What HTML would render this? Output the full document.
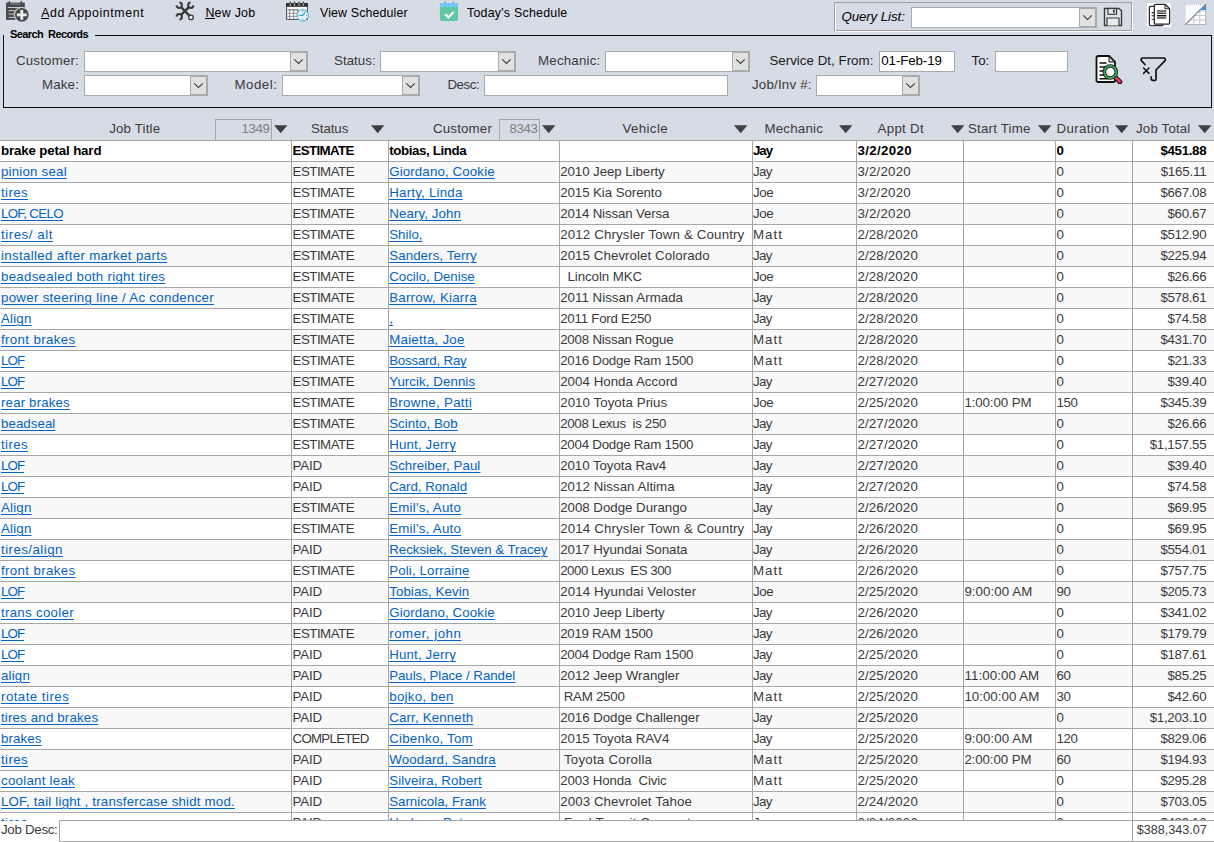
<!DOCTYPE html>
<html lang="en"><head><meta charset="utf-8"><title>Job List</title><style>
html,body{margin:0;padding:0;}
body{width:1214px;height:842px;overflow:hidden;background:#fff;font-family:"Liberation Sans", sans-serif;position:relative;}
#app{position:absolute;left:0;top:0;width:1214px;height:842px;overflow:hidden;}
#app div,#app svg,#app span{position:absolute;}
.t{white-space:pre;line-height:16px;height:16px;}
.u{text-decoration:underline;text-decoration-thickness:1px;text-underline-offset:1.5px;}
</style></head><body><div id="app">
<div style="left:0px;top:0px;width:1214px;height:140px;background:#d6dce5;"></div>
<div style="left:0px;top:141px;width:1214px;height:20px;background:#ffffff;"></div>
<div style="left:0px;top:140px;width:1214px;height:1px;background:#a6a6a6;"></div>
<span class="t" style="left:1.00px;top:143.00px;font-size:13.3px;letter-spacing:-0.148px;color:#000000;font-weight:bold;">brake petal hard</span>
<span class="t" style="left:292.60px;top:143.00px;font-size:13.3px;letter-spacing:-0.638px;color:#000000;font-weight:bold;">ESTIMATE</span>
<span class="t" style="left:389.20px;top:143.00px;font-size:13.3px;letter-spacing:-0.377px;color:#000000;font-weight:bold;">tobias, Linda</span>
<span class="t" style="left:753.00px;top:143.00px;font-size:13.3px;letter-spacing:-1.073px;color:#000000;font-weight:bold;">Jay</span>
<span class="t" style="left:857.40px;top:143.00px;font-size:13.3px;letter-spacing:0.349px;color:#000000;font-weight:bold;">3/2/2020</span>
<span class="t" style="left:1056.40px;top:143.00px;font-size:13.3px;letter-spacing:-0.406px;color:#000000;font-weight:bold;">0</span>
<span class="t" style="left:1160.39px;top:143.00px;font-size:13.3px;letter-spacing:-0.311px;color:#000000;font-weight:bold;">$451.88</span>
<div style="left:0px;top:162px;width:1214px;height:20px;background:#f8f8f8;"></div>
<div style="left:0px;top:161px;width:1214px;height:1px;background:#a6a6a6;"></div>
<span class="t u" style="left:1.00px;top:164.00px;font-size:13.3px;letter-spacing:0.201px;color:#0563c1;">pinion seal</span>
<span class="t" style="left:292.60px;top:164.00px;font-size:13.3px;letter-spacing:-0.509px;color:#3a3a3a;">ESTIMATE</span>
<span class="t u" style="left:389.20px;top:164.00px;font-size:13.3px;letter-spacing:0.131px;color:#0563c1;">Giordano, Cookie</span>
<span class="t" style="left:560.20px;top:164.00px;font-size:13.3px;letter-spacing:-0.071px;color:#3a3a3a;">2010 Jeep Liberty</span>
<span class="t" style="left:753.00px;top:164.00px;font-size:13.3px;letter-spacing:-0.649px;color:#3a3a3a;">Jay</span>
<span class="t" style="left:857.40px;top:164.00px;font-size:13.3px;letter-spacing:0.228px;color:#3a3a3a;">3/2/2020</span>
<span class="t" style="left:1056.40px;top:164.00px;font-size:13.3px;letter-spacing:-0.406px;color:#3a3a3a;">0</span>
<span class="t" style="left:1160.63px;top:164.00px;font-size:13.3px;letter-spacing:-0.185px;color:#3a3a3a;">$165.11</span>
<div style="left:0px;top:183px;width:1214px;height:20px;background:#ffffff;"></div>
<div style="left:0px;top:182px;width:1214px;height:1px;background:#a6a6a6;"></div>
<span class="t u" style="left:1.00px;top:185.00px;font-size:13.3px;letter-spacing:0.380px;color:#0563c1;">tires</span>
<span class="t" style="left:292.60px;top:185.00px;font-size:13.3px;letter-spacing:-0.509px;color:#3a3a3a;">ESTIMATE</span>
<span class="t u" style="left:389.20px;top:185.00px;font-size:13.3px;letter-spacing:0.224px;color:#0563c1;">Harty, Linda</span>
<span class="t" style="left:560.20px;top:185.00px;font-size:13.3px;letter-spacing:-0.078px;color:#3a3a3a;">2015 Kia Sorento</span>
<span class="t" style="left:753.00px;top:185.00px;font-size:13.3px;letter-spacing:-0.432px;color:#3a3a3a;">Joe</span>
<span class="t" style="left:857.40px;top:185.00px;font-size:13.3px;letter-spacing:0.228px;color:#3a3a3a;">3/2/2020</span>
<span class="t" style="left:1056.40px;top:185.00px;font-size:13.3px;letter-spacing:-0.406px;color:#3a3a3a;">0</span>
<span class="t" style="left:1160.49px;top:185.00px;font-size:13.3px;letter-spacing:-0.327px;color:#3a3a3a;">$667.08</span>
<div style="left:0px;top:204px;width:1214px;height:20px;background:#f8f8f8;"></div>
<div style="left:0px;top:203px;width:1214px;height:1px;background:#a6a6a6;"></div>
<span class="t u" style="left:1.00px;top:206.00px;font-size:13.3px;letter-spacing:-0.685px;color:#0563c1;">LOF, CELO</span>
<span class="t" style="left:292.60px;top:206.00px;font-size:13.3px;letter-spacing:-0.509px;color:#3a3a3a;">ESTIMATE</span>
<span class="t u" style="left:389.20px;top:206.00px;font-size:13.3px;letter-spacing:0.111px;color:#0563c1;">Neary, John</span>
<span class="t" style="left:560.20px;top:206.00px;font-size:13.3px;letter-spacing:-0.157px;color:#3a3a3a;">2014 Nissan Versa</span>
<span class="t" style="left:753.00px;top:206.00px;font-size:13.3px;letter-spacing:-0.432px;color:#3a3a3a;">Joe</span>
<span class="t" style="left:857.40px;top:206.00px;font-size:13.3px;letter-spacing:0.228px;color:#3a3a3a;">3/2/2020</span>
<span class="t" style="left:1056.40px;top:206.00px;font-size:13.3px;letter-spacing:-0.406px;color:#3a3a3a;">0</span>
<span class="t" style="left:1167.50px;top:206.00px;font-size:13.3px;letter-spacing:-0.314px;color:#3a3a3a;">$60.67</span>
<div style="left:0px;top:225px;width:1214px;height:20px;background:#ffffff;"></div>
<div style="left:0px;top:224px;width:1214px;height:1px;background:#a6a6a6;"></div>
<span class="t u" style="left:1.00px;top:227.00px;font-size:13.3px;letter-spacing:0.530px;color:#0563c1;">tires/ alt</span>
<span class="t" style="left:292.60px;top:227.00px;font-size:13.3px;letter-spacing:-0.509px;color:#3a3a3a;">ESTIMATE</span>
<span class="t u" style="left:389.20px;top:227.00px;font-size:13.3px;letter-spacing:0.007px;color:#0563c1;">Shilo,</span>
<span class="t" style="left:560.20px;top:227.00px;font-size:13.3px;letter-spacing:0.148px;color:#3a3a3a;">2012 Chrysler Town &amp; Country</span>
<span class="t" style="left:753.00px;top:227.00px;font-size:13.3px;letter-spacing:1.046px;color:#3a3a3a;">Matt</span>
<span class="t" style="left:857.40px;top:227.00px;font-size:13.3px;letter-spacing:0.159px;color:#3a3a3a;">2/28/2020</span>
<span class="t" style="left:1056.40px;top:227.00px;font-size:13.3px;letter-spacing:-0.406px;color:#3a3a3a;">0</span>
<span class="t" style="left:1160.49px;top:227.00px;font-size:13.3px;letter-spacing:-0.327px;color:#3a3a3a;">$512.90</span>
<div style="left:0px;top:246px;width:1214px;height:20px;background:#f8f8f8;"></div>
<div style="left:0px;top:245px;width:1214px;height:1px;background:#a6a6a6;"></div>
<span class="t u" style="left:1.00px;top:248.00px;font-size:13.3px;letter-spacing:0.339px;color:#0563c1;">installed after market parts</span>
<span class="t" style="left:292.60px;top:248.00px;font-size:13.3px;letter-spacing:-0.509px;color:#3a3a3a;">ESTIMATE</span>
<span class="t u" style="left:389.20px;top:248.00px;font-size:13.3px;letter-spacing:0.094px;color:#0563c1;">Sanders, Terry</span>
<span class="t" style="left:560.20px;top:248.00px;font-size:13.3px;letter-spacing:0.069px;color:#3a3a3a;">2015 Chevrolet Colorado</span>
<span class="t" style="left:753.00px;top:248.00px;font-size:13.3px;letter-spacing:-0.649px;color:#3a3a3a;">Jay</span>
<span class="t" style="left:857.40px;top:248.00px;font-size:13.3px;letter-spacing:0.159px;color:#3a3a3a;">2/28/2020</span>
<span class="t" style="left:1056.40px;top:248.00px;font-size:13.3px;letter-spacing:-0.406px;color:#3a3a3a;">0</span>
<span class="t" style="left:1160.49px;top:248.00px;font-size:13.3px;letter-spacing:-0.327px;color:#3a3a3a;">$225.94</span>
<div style="left:0px;top:267px;width:1214px;height:20px;background:#ffffff;"></div>
<div style="left:0px;top:266px;width:1214px;height:1px;background:#a6a6a6;"></div>
<span class="t u" style="left:1.00px;top:269.00px;font-size:13.3px;letter-spacing:0.279px;color:#0563c1;">beadsealed both right tires</span>
<span class="t" style="left:292.60px;top:269.00px;font-size:13.3px;letter-spacing:-0.509px;color:#3a3a3a;">ESTIMATE</span>
<span class="t u" style="left:389.20px;top:269.00px;font-size:13.3px;letter-spacing:-0.015px;color:#0563c1;">Cocilo, Denise</span>
<span class="t" style="left:560.20px;top:269.00px;font-size:13.3px;letter-spacing:-0.061px;color:#3a3a3a;">  Lincoln MKC</span>
<span class="t" style="left:753.00px;top:269.00px;font-size:13.3px;letter-spacing:-0.432px;color:#3a3a3a;">Joe</span>
<span class="t" style="left:857.40px;top:269.00px;font-size:13.3px;letter-spacing:0.159px;color:#3a3a3a;">2/28/2020</span>
<span class="t" style="left:1056.40px;top:269.00px;font-size:13.3px;letter-spacing:-0.406px;color:#3a3a3a;">0</span>
<span class="t" style="left:1167.50px;top:269.00px;font-size:13.3px;letter-spacing:-0.314px;color:#3a3a3a;">$26.66</span>
<div style="left:0px;top:288px;width:1214px;height:20px;background:#f8f8f8;"></div>
<div style="left:0px;top:287px;width:1214px;height:1px;background:#a6a6a6;"></div>
<span class="t u" style="left:1.00px;top:290.00px;font-size:13.3px;letter-spacing:0.287px;color:#0563c1;">power steering line / Ac condencer</span>
<span class="t" style="left:292.60px;top:290.00px;font-size:13.3px;letter-spacing:-0.509px;color:#3a3a3a;">ESTIMATE</span>
<span class="t u" style="left:389.20px;top:290.00px;font-size:13.3px;letter-spacing:0.242px;color:#0563c1;">Barrow, Kiarra</span>
<span class="t" style="left:560.20px;top:290.00px;font-size:13.3px;letter-spacing:0.022px;color:#3a3a3a;">2011 Nissan Armada</span>
<span class="t" style="left:753.00px;top:290.00px;font-size:13.3px;letter-spacing:-0.649px;color:#3a3a3a;">Jay</span>
<span class="t" style="left:857.40px;top:290.00px;font-size:13.3px;letter-spacing:0.159px;color:#3a3a3a;">2/28/2020</span>
<span class="t" style="left:1056.40px;top:290.00px;font-size:13.3px;letter-spacing:-0.406px;color:#3a3a3a;">0</span>
<span class="t" style="left:1160.49px;top:290.00px;font-size:13.3px;letter-spacing:-0.327px;color:#3a3a3a;">$578.61</span>
<div style="left:0px;top:309px;width:1214px;height:20px;background:#ffffff;"></div>
<div style="left:0px;top:308px;width:1214px;height:1px;background:#a6a6a6;"></div>
<span class="t u" style="left:1.00px;top:311.00px;font-size:13.3px;letter-spacing:0.185px;color:#0563c1;">Align</span>
<span class="t" style="left:292.60px;top:311.00px;font-size:13.3px;letter-spacing:-0.509px;color:#3a3a3a;">ESTIMATE</span>
<span class="t u" style="left:389.20px;top:311.00px;font-size:13.3px;letter-spacing:0.040px;color:#0563c1;">,</span>
<span class="t" style="left:560.20px;top:311.00px;font-size:13.3px;letter-spacing:-0.241px;color:#3a3a3a;">2011 Ford E250</span>
<span class="t" style="left:753.00px;top:311.00px;font-size:13.3px;letter-spacing:-0.649px;color:#3a3a3a;">Jay</span>
<span class="t" style="left:857.40px;top:311.00px;font-size:13.3px;letter-spacing:0.159px;color:#3a3a3a;">2/28/2020</span>
<span class="t" style="left:1056.40px;top:311.00px;font-size:13.3px;letter-spacing:-0.406px;color:#3a3a3a;">0</span>
<span class="t" style="left:1167.50px;top:311.00px;font-size:13.3px;letter-spacing:-0.314px;color:#3a3a3a;">$74.58</span>
<div style="left:0px;top:330px;width:1214px;height:20px;background:#f8f8f8;"></div>
<div style="left:0px;top:329px;width:1214px;height:1px;background:#a6a6a6;"></div>
<span class="t u" style="left:1.00px;top:332.00px;font-size:13.3px;letter-spacing:0.353px;color:#0563c1;">front brakes</span>
<span class="t" style="left:292.60px;top:332.00px;font-size:13.3px;letter-spacing:-0.509px;color:#3a3a3a;">ESTIMATE</span>
<span class="t u" style="left:389.20px;top:332.00px;font-size:13.3px;letter-spacing:0.250px;color:#0563c1;">Maietta, Joe</span>
<span class="t" style="left:560.20px;top:332.00px;font-size:13.3px;letter-spacing:-0.214px;color:#3a3a3a;">2008 Nissan Rogue</span>
<span class="t" style="left:753.00px;top:332.00px;font-size:13.3px;letter-spacing:1.046px;color:#3a3a3a;">Matt</span>
<span class="t" style="left:857.40px;top:332.00px;font-size:13.3px;letter-spacing:0.159px;color:#3a3a3a;">2/28/2020</span>
<span class="t" style="left:1056.40px;top:332.00px;font-size:13.3px;letter-spacing:-0.406px;color:#3a3a3a;">0</span>
<span class="t" style="left:1160.49px;top:332.00px;font-size:13.3px;letter-spacing:-0.327px;color:#3a3a3a;">$431.70</span>
<div style="left:0px;top:351px;width:1214px;height:20px;background:#ffffff;"></div>
<div style="left:0px;top:350px;width:1214px;height:1px;background:#a6a6a6;"></div>
<span class="t u" style="left:1.00px;top:353.00px;font-size:13.3px;letter-spacing:-0.915px;color:#0563c1;">LOF</span>
<span class="t" style="left:292.60px;top:353.00px;font-size:13.3px;letter-spacing:-0.509px;color:#3a3a3a;">ESTIMATE</span>
<span class="t u" style="left:389.20px;top:353.00px;font-size:13.3px;letter-spacing:-0.206px;color:#0563c1;">Bossard, Ray</span>
<span class="t" style="left:560.20px;top:353.00px;font-size:13.3px;letter-spacing:-0.236px;color:#3a3a3a;">2016 Dodge Ram 1500</span>
<span class="t" style="left:753.00px;top:353.00px;font-size:13.3px;letter-spacing:1.046px;color:#3a3a3a;">Matt</span>
<span class="t" style="left:857.40px;top:353.00px;font-size:13.3px;letter-spacing:0.159px;color:#3a3a3a;">2/28/2020</span>
<span class="t" style="left:1056.40px;top:353.00px;font-size:13.3px;letter-spacing:-0.406px;color:#3a3a3a;">0</span>
<span class="t" style="left:1167.50px;top:353.00px;font-size:13.3px;letter-spacing:-0.314px;color:#3a3a3a;">$21.33</span>
<div style="left:0px;top:372px;width:1214px;height:20px;background:#f8f8f8;"></div>
<div style="left:0px;top:371px;width:1214px;height:1px;background:#a6a6a6;"></div>
<span class="t u" style="left:1.00px;top:374.00px;font-size:13.3px;letter-spacing:-0.915px;color:#0563c1;">LOF</span>
<span class="t" style="left:292.60px;top:374.00px;font-size:13.3px;letter-spacing:-0.509px;color:#3a3a3a;">ESTIMATE</span>
<span class="t u" style="left:389.20px;top:374.00px;font-size:13.3px;letter-spacing:0.066px;color:#0563c1;">Yurcik, Dennis</span>
<span class="t" style="left:560.20px;top:374.00px;font-size:13.3px;letter-spacing:0.033px;color:#3a3a3a;">2004 Honda Accord</span>
<span class="t" style="left:753.00px;top:374.00px;font-size:13.3px;letter-spacing:-0.649px;color:#3a3a3a;">Jay</span>
<span class="t" style="left:857.40px;top:374.00px;font-size:13.3px;letter-spacing:0.159px;color:#3a3a3a;">2/27/2020</span>
<span class="t" style="left:1056.40px;top:374.00px;font-size:13.3px;letter-spacing:-0.406px;color:#3a3a3a;">0</span>
<span class="t" style="left:1167.50px;top:374.00px;font-size:13.3px;letter-spacing:-0.314px;color:#3a3a3a;">$39.40</span>
<div style="left:0px;top:393px;width:1214px;height:20px;background:#ffffff;"></div>
<div style="left:0px;top:392px;width:1214px;height:1px;background:#a6a6a6;"></div>
<span class="t u" style="left:1.00px;top:395.00px;font-size:13.3px;letter-spacing:0.152px;color:#0563c1;">rear brakes</span>
<span class="t" style="left:292.60px;top:395.00px;font-size:13.3px;letter-spacing:-0.509px;color:#3a3a3a;">ESTIMATE</span>
<span class="t u" style="left:389.20px;top:395.00px;font-size:13.3px;letter-spacing:0.295px;color:#0563c1;">Browne, Patti</span>
<span class="t" style="left:560.20px;top:395.00px;font-size:13.3px;letter-spacing:0.052px;color:#3a3a3a;">2010 Toyota Prius</span>
<span class="t" style="left:753.00px;top:395.00px;font-size:13.3px;letter-spacing:-0.432px;color:#3a3a3a;">Joe</span>
<span class="t" style="left:857.40px;top:395.00px;font-size:13.3px;letter-spacing:0.159px;color:#3a3a3a;">2/25/2020</span>
<span class="t" style="left:964.40px;top:395.00px;font-size:13.3px;letter-spacing:-0.102px;color:#3a3a3a;">1:00:00 PM</span>
<span class="t" style="left:1056.40px;top:395.00px;font-size:13.3px;letter-spacing:-0.396px;color:#3a3a3a;">150</span>
<span class="t" style="left:1160.49px;top:395.00px;font-size:13.3px;letter-spacing:-0.327px;color:#3a3a3a;">$345.39</span>
<div style="left:0px;top:414px;width:1214px;height:20px;background:#f8f8f8;"></div>
<div style="left:0px;top:413px;width:1214px;height:1px;background:#a6a6a6;"></div>
<span class="t u" style="left:1.00px;top:416.00px;font-size:13.3px;letter-spacing:0.048px;color:#0563c1;">beadseal</span>
<span class="t" style="left:292.60px;top:416.00px;font-size:13.3px;letter-spacing:-0.509px;color:#3a3a3a;">ESTIMATE</span>
<span class="t u" style="left:389.20px;top:416.00px;font-size:13.3px;letter-spacing:0.051px;color:#0563c1;">Scinto, Bob</span>
<span class="t" style="left:560.20px;top:416.00px;font-size:13.3px;letter-spacing:-0.320px;color:#3a3a3a;">2008 Lexus  is 250</span>
<span class="t" style="left:753.00px;top:416.00px;font-size:13.3px;letter-spacing:-0.649px;color:#3a3a3a;">Jay</span>
<span class="t" style="left:857.40px;top:416.00px;font-size:13.3px;letter-spacing:0.159px;color:#3a3a3a;">2/27/2020</span>
<span class="t" style="left:1056.40px;top:416.00px;font-size:13.3px;letter-spacing:-0.406px;color:#3a3a3a;">0</span>
<span class="t" style="left:1167.50px;top:416.00px;font-size:13.3px;letter-spacing:-0.314px;color:#3a3a3a;">$26.66</span>
<div style="left:0px;top:435px;width:1214px;height:20px;background:#ffffff;"></div>
<div style="left:0px;top:434px;width:1214px;height:1px;background:#a6a6a6;"></div>
<span class="t u" style="left:1.00px;top:437.00px;font-size:13.3px;letter-spacing:0.380px;color:#0563c1;">tires</span>
<span class="t" style="left:292.60px;top:437.00px;font-size:13.3px;letter-spacing:-0.509px;color:#3a3a3a;">ESTIMATE</span>
<span class="t u" style="left:389.20px;top:437.00px;font-size:13.3px;letter-spacing:0.157px;color:#0563c1;">Hunt, Jerry</span>
<span class="t" style="left:560.20px;top:437.00px;font-size:13.3px;letter-spacing:-0.236px;color:#3a3a3a;">2004 Dodge Ram 1500</span>
<span class="t" style="left:753.00px;top:437.00px;font-size:13.3px;letter-spacing:-0.649px;color:#3a3a3a;">Jay</span>
<span class="t" style="left:857.40px;top:437.00px;font-size:13.3px;letter-spacing:0.159px;color:#3a3a3a;">2/27/2020</span>
<span class="t" style="left:1056.40px;top:437.00px;font-size:13.3px;letter-spacing:-0.406px;color:#3a3a3a;">0</span>
<span class="t" style="left:1149.78px;top:437.00px;font-size:13.3px;letter-spacing:-0.292px;color:#3a3a3a;">$1,157.55</span>
<div style="left:0px;top:456px;width:1214px;height:20px;background:#f8f8f8;"></div>
<div style="left:0px;top:455px;width:1214px;height:1px;background:#a6a6a6;"></div>
<span class="t u" style="left:1.00px;top:458.00px;font-size:13.3px;letter-spacing:-0.915px;color:#0563c1;">LOF</span>
<span class="t" style="left:292.60px;top:458.00px;font-size:13.3px;letter-spacing:-0.157px;color:#3a3a3a;">PAID</span>
<span class="t u" style="left:389.20px;top:458.00px;font-size:13.3px;letter-spacing:0.069px;color:#0563c1;">Schreiber, Paul</span>
<span class="t" style="left:560.20px;top:458.00px;font-size:13.3px;letter-spacing:-0.059px;color:#3a3a3a;">2010 Toyota Rav4</span>
<span class="t" style="left:753.00px;top:458.00px;font-size:13.3px;letter-spacing:-0.649px;color:#3a3a3a;">Jay</span>
<span class="t" style="left:857.40px;top:458.00px;font-size:13.3px;letter-spacing:0.159px;color:#3a3a3a;">2/27/2020</span>
<span class="t" style="left:1056.40px;top:458.00px;font-size:13.3px;letter-spacing:-0.406px;color:#3a3a3a;">0</span>
<span class="t" style="left:1167.50px;top:458.00px;font-size:13.3px;letter-spacing:-0.314px;color:#3a3a3a;">$39.40</span>
<div style="left:0px;top:477px;width:1214px;height:20px;background:#ffffff;"></div>
<div style="left:0px;top:476px;width:1214px;height:1px;background:#a6a6a6;"></div>
<span class="t u" style="left:1.00px;top:479.00px;font-size:13.3px;letter-spacing:-0.915px;color:#0563c1;">LOF</span>
<span class="t" style="left:292.60px;top:479.00px;font-size:13.3px;letter-spacing:-0.157px;color:#3a3a3a;">PAID</span>
<span class="t u" style="left:389.20px;top:479.00px;font-size:13.3px;letter-spacing:-0.041px;color:#0563c1;">Card, Ronald</span>
<span class="t" style="left:560.20px;top:479.00px;font-size:13.3px;letter-spacing:0.035px;color:#3a3a3a;">2012 Nissan Altima</span>
<span class="t" style="left:753.00px;top:479.00px;font-size:13.3px;letter-spacing:-0.649px;color:#3a3a3a;">Jay</span>
<span class="t" style="left:857.40px;top:479.00px;font-size:13.3px;letter-spacing:0.159px;color:#3a3a3a;">2/27/2020</span>
<span class="t" style="left:1056.40px;top:479.00px;font-size:13.3px;letter-spacing:-0.406px;color:#3a3a3a;">0</span>
<span class="t" style="left:1167.50px;top:479.00px;font-size:13.3px;letter-spacing:-0.314px;color:#3a3a3a;">$74.58</span>
<div style="left:0px;top:498px;width:1214px;height:20px;background:#f8f8f8;"></div>
<div style="left:0px;top:497px;width:1214px;height:1px;background:#a6a6a6;"></div>
<span class="t u" style="left:1.00px;top:500.00px;font-size:13.3px;letter-spacing:0.185px;color:#0563c1;">Align</span>
<span class="t" style="left:292.60px;top:500.00px;font-size:13.3px;letter-spacing:-0.509px;color:#3a3a3a;">ESTIMATE</span>
<span class="t u" style="left:389.20px;top:500.00px;font-size:13.3px;letter-spacing:0.245px;color:#0563c1;">Emil&#x27;s, Auto</span>
<span class="t" style="left:560.20px;top:500.00px;font-size:13.3px;letter-spacing:-0.026px;color:#3a3a3a;">2008 Dodge Durango</span>
<span class="t" style="left:753.00px;top:500.00px;font-size:13.3px;letter-spacing:-0.649px;color:#3a3a3a;">Jay</span>
<span class="t" style="left:857.40px;top:500.00px;font-size:13.3px;letter-spacing:0.159px;color:#3a3a3a;">2/26/2020</span>
<span class="t" style="left:1056.40px;top:500.00px;font-size:13.3px;letter-spacing:-0.406px;color:#3a3a3a;">0</span>
<span class="t" style="left:1167.50px;top:500.00px;font-size:13.3px;letter-spacing:-0.314px;color:#3a3a3a;">$69.95</span>
<div style="left:0px;top:519px;width:1214px;height:20px;background:#ffffff;"></div>
<div style="left:0px;top:518px;width:1214px;height:1px;background:#a6a6a6;"></div>
<span class="t u" style="left:1.00px;top:521.00px;font-size:13.3px;letter-spacing:0.185px;color:#0563c1;">Align</span>
<span class="t" style="left:292.60px;top:521.00px;font-size:13.3px;letter-spacing:-0.509px;color:#3a3a3a;">ESTIMATE</span>
<span class="t u" style="left:389.20px;top:521.00px;font-size:13.3px;letter-spacing:0.245px;color:#0563c1;">Emil&#x27;s, Auto</span>
<span class="t" style="left:560.20px;top:521.00px;font-size:13.3px;letter-spacing:0.148px;color:#3a3a3a;">2014 Chrysler Town &amp; Country</span>
<span class="t" style="left:753.00px;top:521.00px;font-size:13.3px;letter-spacing:-0.649px;color:#3a3a3a;">Jay</span>
<span class="t" style="left:857.40px;top:521.00px;font-size:13.3px;letter-spacing:0.159px;color:#3a3a3a;">2/26/2020</span>
<span class="t" style="left:1056.40px;top:521.00px;font-size:13.3px;letter-spacing:-0.406px;color:#3a3a3a;">0</span>
<span class="t" style="left:1167.50px;top:521.00px;font-size:13.3px;letter-spacing:-0.314px;color:#3a3a3a;">$69.95</span>
<div style="left:0px;top:540px;width:1214px;height:20px;background:#f8f8f8;"></div>
<div style="left:0px;top:539px;width:1214px;height:1px;background:#a6a6a6;"></div>
<span class="t u" style="left:1.00px;top:542.00px;font-size:13.3px;letter-spacing:0.446px;color:#0563c1;">tires/align</span>
<span class="t" style="left:292.60px;top:542.00px;font-size:13.3px;letter-spacing:-0.157px;color:#3a3a3a;">PAID</span>
<span class="t u" style="left:389.20px;top:542.00px;font-size:13.3px;letter-spacing:-0.023px;color:#0563c1;">Recksiek, Steven &amp; Tracey</span>
<span class="t" style="left:560.20px;top:542.00px;font-size:13.3px;letter-spacing:-0.034px;color:#3a3a3a;">2017 Hyundai Sonata</span>
<span class="t" style="left:753.00px;top:542.00px;font-size:13.3px;letter-spacing:-0.649px;color:#3a3a3a;">Jay</span>
<span class="t" style="left:857.40px;top:542.00px;font-size:13.3px;letter-spacing:0.159px;color:#3a3a3a;">2/26/2020</span>
<span class="t" style="left:1056.40px;top:542.00px;font-size:13.3px;letter-spacing:-0.406px;color:#3a3a3a;">0</span>
<span class="t" style="left:1160.49px;top:542.00px;font-size:13.3px;letter-spacing:-0.327px;color:#3a3a3a;">$554.01</span>
<div style="left:0px;top:561px;width:1214px;height:20px;background:#ffffff;"></div>
<div style="left:0px;top:560px;width:1214px;height:1px;background:#a6a6a6;"></div>
<span class="t u" style="left:1.00px;top:563.00px;font-size:13.3px;letter-spacing:0.353px;color:#0563c1;">front brakes</span>
<span class="t" style="left:292.60px;top:563.00px;font-size:13.3px;letter-spacing:-0.509px;color:#3a3a3a;">ESTIMATE</span>
<span class="t u" style="left:389.20px;top:563.00px;font-size:13.3px;letter-spacing:0.140px;color:#0563c1;">Poli, Lorraine</span>
<span class="t" style="left:560.20px;top:563.00px;font-size:13.3px;letter-spacing:-0.498px;color:#3a3a3a;">2000 Lexus  ES 300</span>
<span class="t" style="left:753.00px;top:563.00px;font-size:13.3px;letter-spacing:1.046px;color:#3a3a3a;">Matt</span>
<span class="t" style="left:857.40px;top:563.00px;font-size:13.3px;letter-spacing:0.159px;color:#3a3a3a;">2/26/2020</span>
<span class="t" style="left:1056.40px;top:563.00px;font-size:13.3px;letter-spacing:-0.406px;color:#3a3a3a;">0</span>
<span class="t" style="left:1160.49px;top:563.00px;font-size:13.3px;letter-spacing:-0.327px;color:#3a3a3a;">$757.75</span>
<div style="left:0px;top:582px;width:1214px;height:20px;background:#f8f8f8;"></div>
<div style="left:0px;top:581px;width:1214px;height:1px;background:#a6a6a6;"></div>
<span class="t u" style="left:1.00px;top:584.00px;font-size:13.3px;letter-spacing:-0.915px;color:#0563c1;">LOF</span>
<span class="t" style="left:292.60px;top:584.00px;font-size:13.3px;letter-spacing:-0.157px;color:#3a3a3a;">PAID</span>
<span class="t u" style="left:389.20px;top:584.00px;font-size:13.3px;letter-spacing:0.076px;color:#0563c1;">Tobias, Kevin</span>
<span class="t" style="left:560.20px;top:584.00px;font-size:13.3px;letter-spacing:0.109px;color:#3a3a3a;">2014 Hyundai Veloster</span>
<span class="t" style="left:753.00px;top:584.00px;font-size:13.3px;letter-spacing:-0.432px;color:#3a3a3a;">Joe</span>
<span class="t" style="left:857.40px;top:584.00px;font-size:13.3px;letter-spacing:0.159px;color:#3a3a3a;">2/25/2020</span>
<span class="t" style="left:964.40px;top:584.00px;font-size:13.3px;letter-spacing:0.064px;color:#3a3a3a;">9:00:00 AM</span>
<span class="t" style="left:1056.40px;top:584.00px;font-size:13.3px;letter-spacing:-0.398px;color:#3a3a3a;">90</span>
<span class="t" style="left:1160.49px;top:584.00px;font-size:13.3px;letter-spacing:-0.327px;color:#3a3a3a;">$205.73</span>
<div style="left:0px;top:603px;width:1214px;height:20px;background:#ffffff;"></div>
<div style="left:0px;top:602px;width:1214px;height:1px;background:#a6a6a6;"></div>
<span class="t u" style="left:1.00px;top:605.00px;font-size:13.3px;letter-spacing:0.283px;color:#0563c1;">trans cooler</span>
<span class="t" style="left:292.60px;top:605.00px;font-size:13.3px;letter-spacing:-0.157px;color:#3a3a3a;">PAID</span>
<span class="t u" style="left:389.20px;top:605.00px;font-size:13.3px;letter-spacing:0.131px;color:#0563c1;">Giordano, Cookie</span>
<span class="t" style="left:560.20px;top:605.00px;font-size:13.3px;letter-spacing:-0.071px;color:#3a3a3a;">2010 Jeep Liberty</span>
<span class="t" style="left:753.00px;top:605.00px;font-size:13.3px;letter-spacing:-0.649px;color:#3a3a3a;">Jay</span>
<span class="t" style="left:857.40px;top:605.00px;font-size:13.3px;letter-spacing:0.159px;color:#3a3a3a;">2/26/2020</span>
<span class="t" style="left:1056.40px;top:605.00px;font-size:13.3px;letter-spacing:-0.406px;color:#3a3a3a;">0</span>
<span class="t" style="left:1160.49px;top:605.00px;font-size:13.3px;letter-spacing:-0.327px;color:#3a3a3a;">$341.02</span>
<div style="left:0px;top:624px;width:1214px;height:20px;background:#f8f8f8;"></div>
<div style="left:0px;top:623px;width:1214px;height:1px;background:#a6a6a6;"></div>
<span class="t u" style="left:1.00px;top:626.00px;font-size:13.3px;letter-spacing:-0.915px;color:#0563c1;">LOF</span>
<span class="t" style="left:292.60px;top:626.00px;font-size:13.3px;letter-spacing:-0.509px;color:#3a3a3a;">ESTIMATE</span>
<span class="t u" style="left:389.20px;top:626.00px;font-size:13.3px;letter-spacing:0.516px;color:#0563c1;">romer, john</span>
<span class="t" style="left:560.20px;top:626.00px;font-size:13.3px;letter-spacing:-0.283px;color:#3a3a3a;">2019 RAM 1500</span>
<span class="t" style="left:753.00px;top:626.00px;font-size:13.3px;letter-spacing:-0.649px;color:#3a3a3a;">Jay</span>
<span class="t" style="left:857.40px;top:626.00px;font-size:13.3px;letter-spacing:0.159px;color:#3a3a3a;">2/26/2020</span>
<span class="t" style="left:1056.40px;top:626.00px;font-size:13.3px;letter-spacing:-0.406px;color:#3a3a3a;">0</span>
<span class="t" style="left:1160.49px;top:626.00px;font-size:13.3px;letter-spacing:-0.327px;color:#3a3a3a;">$179.79</span>
<div style="left:0px;top:645px;width:1214px;height:20px;background:#ffffff;"></div>
<div style="left:0px;top:644px;width:1214px;height:1px;background:#a6a6a6;"></div>
<span class="t u" style="left:1.00px;top:647.00px;font-size:13.3px;letter-spacing:-0.915px;color:#0563c1;">LOF</span>
<span class="t" style="left:292.60px;top:647.00px;font-size:13.3px;letter-spacing:-0.157px;color:#3a3a3a;">PAID</span>
<span class="t u" style="left:389.20px;top:647.00px;font-size:13.3px;letter-spacing:0.157px;color:#0563c1;">Hunt, Jerry</span>
<span class="t" style="left:560.20px;top:647.00px;font-size:13.3px;letter-spacing:-0.236px;color:#3a3a3a;">2004 Dodge Ram 1500</span>
<span class="t" style="left:753.00px;top:647.00px;font-size:13.3px;letter-spacing:-0.649px;color:#3a3a3a;">Jay</span>
<span class="t" style="left:857.40px;top:647.00px;font-size:13.3px;letter-spacing:0.159px;color:#3a3a3a;">2/25/2020</span>
<span class="t" style="left:1056.40px;top:647.00px;font-size:13.3px;letter-spacing:-0.406px;color:#3a3a3a;">0</span>
<span class="t" style="left:1160.49px;top:647.00px;font-size:13.3px;letter-spacing:-0.327px;color:#3a3a3a;">$187.61</span>
<div style="left:0px;top:666px;width:1214px;height:20px;background:#f8f8f8;"></div>
<div style="left:0px;top:665px;width:1214px;height:1px;background:#a6a6a6;"></div>
<span class="t u" style="left:1.00px;top:668.00px;font-size:13.3px;letter-spacing:0.183px;color:#0563c1;">align</span>
<span class="t" style="left:292.60px;top:668.00px;font-size:13.3px;letter-spacing:-0.157px;color:#3a3a3a;">PAID</span>
<span class="t u" style="left:389.20px;top:668.00px;font-size:13.3px;letter-spacing:-0.054px;color:#0563c1;">Pauls, Place / Randel</span>
<span class="t" style="left:560.20px;top:668.00px;font-size:13.3px;letter-spacing:-0.017px;color:#3a3a3a;">2012 Jeep Wrangler</span>
<span class="t" style="left:753.00px;top:668.00px;font-size:13.3px;letter-spacing:-0.649px;color:#3a3a3a;">Jay</span>
<span class="t" style="left:857.40px;top:668.00px;font-size:13.3px;letter-spacing:0.159px;color:#3a3a3a;">2/25/2020</span>
<span class="t" style="left:964.40px;top:668.00px;font-size:13.3px;letter-spacing:0.112px;color:#3a3a3a;">11:00:00 AM</span>
<span class="t" style="left:1056.40px;top:668.00px;font-size:13.3px;letter-spacing:-0.398px;color:#3a3a3a;">60</span>
<span class="t" style="left:1167.50px;top:668.00px;font-size:13.3px;letter-spacing:-0.314px;color:#3a3a3a;">$85.25</span>
<div style="left:0px;top:687px;width:1214px;height:20px;background:#ffffff;"></div>
<div style="left:0px;top:686px;width:1214px;height:1px;background:#a6a6a6;"></div>
<span class="t u" style="left:1.00px;top:689.00px;font-size:13.3px;letter-spacing:0.452px;color:#0563c1;">rotate tires</span>
<span class="t" style="left:292.60px;top:689.00px;font-size:13.3px;letter-spacing:-0.157px;color:#3a3a3a;">PAID</span>
<span class="t u" style="left:389.20px;top:689.00px;font-size:13.3px;letter-spacing:0.309px;color:#0563c1;">bojko, ben</span>
<span class="t" style="left:560.20px;top:689.00px;font-size:13.3px;letter-spacing:-0.233px;color:#3a3a3a;"> RAM 2500</span>
<span class="t" style="left:753.00px;top:689.00px;font-size:13.3px;letter-spacing:1.046px;color:#3a3a3a;">Matt</span>
<span class="t" style="left:857.40px;top:689.00px;font-size:13.3px;letter-spacing:0.159px;color:#3a3a3a;">2/25/2020</span>
<span class="t" style="left:964.40px;top:689.00px;font-size:13.3px;letter-spacing:0.023px;color:#3a3a3a;">10:00:00 AM</span>
<span class="t" style="left:1056.40px;top:689.00px;font-size:13.3px;letter-spacing:-0.398px;color:#3a3a3a;">30</span>
<span class="t" style="left:1167.50px;top:689.00px;font-size:13.3px;letter-spacing:-0.314px;color:#3a3a3a;">$42.60</span>
<div style="left:0px;top:708px;width:1214px;height:20px;background:#f8f8f8;"></div>
<div style="left:0px;top:707px;width:1214px;height:1px;background:#a6a6a6;"></div>
<span class="t u" style="left:1.00px;top:710.00px;font-size:13.3px;letter-spacing:0.162px;color:#0563c1;">tires and brakes</span>
<span class="t" style="left:292.60px;top:710.00px;font-size:13.3px;letter-spacing:-0.157px;color:#3a3a3a;">PAID</span>
<span class="t u" style="left:389.20px;top:710.00px;font-size:13.3px;letter-spacing:0.162px;color:#0563c1;">Carr, Kenneth</span>
<span class="t" style="left:560.20px;top:710.00px;font-size:13.3px;letter-spacing:-0.052px;color:#3a3a3a;">2016 Dodge Challenger</span>
<span class="t" style="left:753.00px;top:710.00px;font-size:13.3px;letter-spacing:-0.649px;color:#3a3a3a;">Jay</span>
<span class="t" style="left:857.40px;top:710.00px;font-size:13.3px;letter-spacing:0.159px;color:#3a3a3a;">2/25/2020</span>
<span class="t" style="left:1056.40px;top:710.00px;font-size:13.3px;letter-spacing:-0.406px;color:#3a3a3a;">0</span>
<span class="t" style="left:1149.78px;top:710.00px;font-size:13.3px;letter-spacing:-0.292px;color:#3a3a3a;">$1,203.10</span>
<div style="left:0px;top:729px;width:1214px;height:20px;background:#ffffff;"></div>
<div style="left:0px;top:728px;width:1214px;height:1px;background:#a6a6a6;"></div>
<span class="t u" style="left:1.00px;top:731.00px;font-size:13.3px;letter-spacing:0.087px;color:#0563c1;">brakes</span>
<span class="t" style="left:292.60px;top:731.00px;font-size:13.3px;letter-spacing:-0.750px;color:#3a3a3a;">COMPLETED</span>
<span class="t u" style="left:389.20px;top:731.00px;font-size:13.3px;letter-spacing:0.222px;color:#0563c1;">Cibenko, Tom</span>
<span class="t" style="left:560.20px;top:731.00px;font-size:13.3px;letter-spacing:-0.026px;color:#3a3a3a;">2015 Toyota RAV4</span>
<span class="t" style="left:753.00px;top:731.00px;font-size:13.3px;letter-spacing:-0.649px;color:#3a3a3a;">Jay</span>
<span class="t" style="left:857.40px;top:731.00px;font-size:13.3px;letter-spacing:0.159px;color:#3a3a3a;">2/25/2020</span>
<span class="t" style="left:964.40px;top:731.00px;font-size:13.3px;letter-spacing:0.064px;color:#3a3a3a;">9:00:00 AM</span>
<span class="t" style="left:1056.40px;top:731.00px;font-size:13.3px;letter-spacing:-0.396px;color:#3a3a3a;">120</span>
<span class="t" style="left:1160.49px;top:731.00px;font-size:13.3px;letter-spacing:-0.327px;color:#3a3a3a;">$829.06</span>
<div style="left:0px;top:750px;width:1214px;height:20px;background:#f8f8f8;"></div>
<div style="left:0px;top:749px;width:1214px;height:1px;background:#a6a6a6;"></div>
<span class="t u" style="left:1.00px;top:752.00px;font-size:13.3px;letter-spacing:0.380px;color:#0563c1;">tires</span>
<span class="t" style="left:292.60px;top:752.00px;font-size:13.3px;letter-spacing:-0.157px;color:#3a3a3a;">PAID</span>
<span class="t u" style="left:389.20px;top:752.00px;font-size:13.3px;letter-spacing:0.183px;color:#0563c1;">Woodard, Sandra</span>
<span class="t" style="left:560.20px;top:752.00px;font-size:13.3px;letter-spacing:0.238px;color:#3a3a3a;"> Toyota Corolla</span>
<span class="t" style="left:753.00px;top:752.00px;font-size:13.3px;letter-spacing:1.046px;color:#3a3a3a;">Matt</span>
<span class="t" style="left:857.40px;top:752.00px;font-size:13.3px;letter-spacing:0.159px;color:#3a3a3a;">2/25/2020</span>
<span class="t" style="left:964.40px;top:752.00px;font-size:13.3px;letter-spacing:-0.102px;color:#3a3a3a;">2:00:00 PM</span>
<span class="t" style="left:1056.40px;top:752.00px;font-size:13.3px;letter-spacing:-0.398px;color:#3a3a3a;">60</span>
<span class="t" style="left:1160.49px;top:752.00px;font-size:13.3px;letter-spacing:-0.327px;color:#3a3a3a;">$194.93</span>
<div style="left:0px;top:771px;width:1214px;height:20px;background:#ffffff;"></div>
<div style="left:0px;top:770px;width:1214px;height:1px;background:#a6a6a6;"></div>
<span class="t u" style="left:1.00px;top:773.00px;font-size:13.3px;letter-spacing:0.252px;color:#0563c1;">coolant leak</span>
<span class="t" style="left:292.60px;top:773.00px;font-size:13.3px;letter-spacing:-0.157px;color:#3a3a3a;">PAID</span>
<span class="t u" style="left:389.20px;top:773.00px;font-size:13.3px;letter-spacing:0.110px;color:#0563c1;">Silveira, Robert</span>
<span class="t" style="left:560.20px;top:773.00px;font-size:13.3px;letter-spacing:-0.134px;color:#3a3a3a;">2003 Honda  Civic</span>
<span class="t" style="left:753.00px;top:773.00px;font-size:13.3px;letter-spacing:1.046px;color:#3a3a3a;">Matt</span>
<span class="t" style="left:857.40px;top:773.00px;font-size:13.3px;letter-spacing:0.159px;color:#3a3a3a;">2/25/2020</span>
<span class="t" style="left:1056.40px;top:773.00px;font-size:13.3px;letter-spacing:-0.406px;color:#3a3a3a;">0</span>
<span class="t" style="left:1160.49px;top:773.00px;font-size:13.3px;letter-spacing:-0.327px;color:#3a3a3a;">$295.28</span>
<div style="left:0px;top:792px;width:1214px;height:20px;background:#f8f8f8;"></div>
<div style="left:0px;top:791px;width:1214px;height:1px;background:#a6a6a6;"></div>
<span class="t u" style="left:1.00px;top:794.00px;font-size:13.3px;letter-spacing:0.188px;color:#0563c1;">LOF, tail light , transfercase shidt mod.</span>
<span class="t" style="left:292.60px;top:794.00px;font-size:13.3px;letter-spacing:-0.157px;color:#3a3a3a;">PAID</span>
<span class="t u" style="left:389.20px;top:794.00px;font-size:13.3px;letter-spacing:-0.010px;color:#0563c1;">Sarnicola, Frank</span>
<span class="t" style="left:560.20px;top:794.00px;font-size:13.3px;letter-spacing:0.092px;color:#3a3a3a;">2003 Chevrolet Tahoe</span>
<span class="t" style="left:753.00px;top:794.00px;font-size:13.3px;letter-spacing:-0.649px;color:#3a3a3a;">Jay</span>
<span class="t" style="left:857.40px;top:794.00px;font-size:13.3px;letter-spacing:0.159px;color:#3a3a3a;">2/24/2020</span>
<span class="t" style="left:1056.40px;top:794.00px;font-size:13.3px;letter-spacing:-0.406px;color:#3a3a3a;">0</span>
<span class="t" style="left:1160.49px;top:794.00px;font-size:13.3px;letter-spacing:-0.327px;color:#3a3a3a;">$703.05</span>
<div style="left:0px;top:813px;width:1214px;height:20px;background:#ffffff;"></div>
<div style="left:0px;top:812px;width:1214px;height:1px;background:#a6a6a6;"></div>
<span class="t u" style="left:1.00px;top:815.00px;font-size:13.3px;letter-spacing:0.380px;color:#0563c1;">tires</span>
<span class="t" style="left:292.60px;top:815.00px;font-size:13.3px;letter-spacing:-0.157px;color:#3a3a3a;">PAID</span>
<span class="t u" style="left:389.20px;top:815.00px;font-size:13.3px;letter-spacing:0.061px;color:#0563c1;">Hudson, Pat</span>
<span class="t" style="left:560.20px;top:815.00px;font-size:13.3px;letter-spacing:0.127px;color:#3a3a3a;"> Ford Transit Connect</span>
<span class="t" style="left:753.00px;top:815.00px;font-size:13.3px;letter-spacing:-0.649px;color:#3a3a3a;">Jay</span>
<span class="t" style="left:857.40px;top:815.00px;font-size:13.3px;letter-spacing:0.159px;color:#3a3a3a;">2/24/2020</span>
<span class="t" style="left:1056.40px;top:815.00px;font-size:13.3px;letter-spacing:-0.406px;color:#3a3a3a;">0</span>
<span class="t" style="left:1160.49px;top:815.00px;font-size:13.3px;letter-spacing:-0.327px;color:#3a3a3a;">$489.16</span>
<div style="left:291px;top:140px;width:1px;height:681px;background:#a6a6a6;"></div>
<div style="left:388px;top:140px;width:1px;height:681px;background:#a6a6a6;"></div>
<div style="left:559px;top:140px;width:1px;height:681px;background:#a6a6a6;"></div>
<div style="left:752px;top:140px;width:1px;height:681px;background:#a6a6a6;"></div>
<div style="left:856px;top:140px;width:1px;height:681px;background:#a6a6a6;"></div>
<div style="left:963px;top:140px;width:1px;height:681px;background:#a6a6a6;"></div>
<div style="left:1055px;top:140px;width:1px;height:681px;background:#a6a6a6;"></div>
<div style="left:1132px;top:140px;width:1px;height:681px;background:#a6a6a6;"></div>
<span class="t" style="left:109.20px;top:121.00px;font-size:13.3px;letter-spacing:0.174px;color:#3a3a3a;">Job Title</span>
<span class="t" style="left:311.00px;top:121.00px;font-size:13.3px;letter-spacing:-0.084px;color:#3a3a3a;">Status</span>
<span class="t" style="left:433.00px;top:121.00px;font-size:13.3px;letter-spacing:0.170px;color:#3a3a3a;">Customer</span>
<span class="t" style="left:622.50px;top:121.00px;font-size:13.3px;letter-spacing:0.373px;color:#3a3a3a;">Vehicle</span>
<span class="t" style="left:764.50px;top:121.00px;font-size:13.3px;letter-spacing:0.197px;color:#3a3a3a;">Mechanic</span>
<span class="t" style="left:877.50px;top:121.00px;font-size:13.3px;letter-spacing:0.306px;color:#3a3a3a;">Appt Dt</span>
<span class="t" style="left:968.00px;top:121.00px;font-size:13.3px;letter-spacing:0.191px;color:#3a3a3a;">Start Time</span>
<span class="t" style="left:1056.50px;top:121.00px;font-size:13.3px;letter-spacing:0.342px;color:#3a3a3a;">Duration</span>
<span class="t" style="left:1136.00px;top:121.00px;font-size:13.3px;letter-spacing:0.168px;color:#3a3a3a;">Job Total</span>
<div style="left:215px;top:119px;width:57px;height:22px;border:1px solid #a6a6a6;box-sizing:border-box;"></div>
<div style="left:499px;top:119px;width:41px;height:22px;border:1px solid #a6a6a6;box-sizing:border-box;"></div>
<span class="t" style="left:241.40px;top:121.00px;font-size:13.3px;letter-spacing:-0.398px;color:#7f7f7f;">1349</span>
<span class="t" style="left:509.40px;top:121.00px;font-size:13.3px;letter-spacing:-0.398px;color:#7f7f7f;">8343</span>
<svg style="left:274.3px;top:125px" width="14" height="9" viewBox="0 0 14 9"><path d="M0 0.3H13.4L6.7 8.3Z" fill="#404040"/></svg>
<svg style="left:370.8px;top:125px" width="14" height="9" viewBox="0 0 14 9"><path d="M0 0.3H13.4L6.7 8.3Z" fill="#404040"/></svg>
<svg style="left:542.2px;top:125px" width="14" height="9" viewBox="0 0 14 9"><path d="M0 0.3H13.4L6.7 8.3Z" fill="#404040"/></svg>
<svg style="left:733.8px;top:125px" width="14" height="9" viewBox="0 0 14 9"><path d="M0 0.3H13.4L6.7 8.3Z" fill="#404040"/></svg>
<svg style="left:839.2px;top:125px" width="14" height="9" viewBox="0 0 14 9"><path d="M0 0.3H13.4L6.7 8.3Z" fill="#404040"/></svg>
<svg style="left:951.2px;top:125px" width="14" height="9" viewBox="0 0 14 9"><path d="M0 0.3H13.4L6.7 8.3Z" fill="#404040"/></svg>
<svg style="left:1038.0px;top:125px" width="14" height="9" viewBox="0 0 14 9"><path d="M0 0.3H13.4L6.7 8.3Z" fill="#404040"/></svg>
<svg style="left:1114.6px;top:125px" width="14" height="9" viewBox="0 0 14 9"><path d="M0 0.3H13.4L6.7 8.3Z" fill="#404040"/></svg>
<svg style="left:1198.3px;top:125px" width="14" height="9" viewBox="0 0 14 9"><path d="M0 0.3H13.4L6.7 8.3Z" fill="#404040"/></svg>
<span class="t" style="left:41.20px;top:5.00px;font-size:12.4px;letter-spacing:0.574px;color:#000000;">Add Appointment</span>
<div style="left:41.2px;top:18px;width:8px;height:1px;background:#000000;"></div>
<span class="t" style="left:205.40px;top:5.00px;font-size:12.4px;letter-spacing:0.254px;color:#000000;">New Job</span>
<div style="left:205.4px;top:18px;width:9.5px;height:1px;background:#000000;"></div>
<span class="t" style="left:320.00px;top:5.00px;font-size:12.4px;letter-spacing:0.137px;color:#000000;">View Scheduler</span>
<span class="t" style="left:467.00px;top:5.00px;font-size:12.4px;letter-spacing:0.235px;color:#000000;">Today&#x27;s Schedule</span>
<div style="left:3px;top:35px;width:1px;height:73px;background:#111111;"></div>
<div style="left:1211px;top:35px;width:1px;height:73px;background:#111111;"></div>
<div style="left:3px;top:107px;width:1209px;height:1px;background:#111111;"></div>
<div style="left:95px;top:35px;width:1117px;height:1px;background:#111111;"></div>
<span class="t" style="left:10.00px;top:26.00px;font-size:11px;letter-spacing:-0.589px;color:#000000;font-weight:bold;">Search  Records</span>
<span class="t" style="left:16.00px;top:53.00px;font-size:13.3px;letter-spacing:0.184px;color:#3a3a3a;">Customer:</span>
<span class="t" style="left:42.00px;top:77.00px;font-size:13.3px;letter-spacing:0.156px;color:#3a3a3a;">Make:</span>
<span class="t" style="left:334.00px;top:53.00px;font-size:13.3px;letter-spacing:0.044px;color:#3a3a3a;">Status:</span>
<span class="t" style="left:234.40px;top:77.00px;font-size:13.3px;letter-spacing:0.513px;color:#3a3a3a;">Model:</span>
<span class="t" style="left:538.00px;top:53.00px;font-size:13.3px;letter-spacing:0.210px;color:#3a3a3a;">Mechanic:</span>
<span class="t" style="left:447.40px;top:77.00px;font-size:13.3px;letter-spacing:-0.400px;color:#3a3a3a;">Desc:</span>
<span class="t" style="left:769.40px;top:53.00px;font-size:13.3px;letter-spacing:0.033px;color:#1a1a1a;">Service Dt, From:</span>
<span class="t" style="left:752.00px;top:77.00px;font-size:13.3px;letter-spacing:0.204px;color:#3a3a3a;">Job/Inv #:</span>
<span class="t" style="left:971.60px;top:53.00px;font-size:13.3px;letter-spacing:-0.083px;color:#1a1a1a;">To:</span>
<span class="t" style="left:841.40px;top:9.00px;font-size:13.3px;letter-spacing:-0.082px;color:#000000;font-style:italic;">Query List:</span>
<div style="left:84px;top:51px;width:224px;height:21px;background:#ffffff;border:1px solid #a8abab;box-sizing:border-box;"></div>
<div style="left:290px;top:52px;width:17px;height:19px;background:#e1e1e1;border:1px solid #a8abab;box-sizing:border-box;"></div>
<svg style="left:293px;top:58px" width="11" height="7" viewBox="0 0 11 7"><path d="M1.2 1.3L5.5 5.5L9.8 1.3" fill="none" stroke="#3c3c3c" stroke-width="1.1"/></svg>
<div style="left:84px;top:75px;width:124px;height:21px;background:#ffffff;border:1px solid #a8abab;box-sizing:border-box;"></div>
<div style="left:190px;top:76px;width:17px;height:19px;background:#e1e1e1;border:1px solid #a8abab;box-sizing:border-box;"></div>
<svg style="left:193px;top:82px" width="11" height="7" viewBox="0 0 11 7"><path d="M1.2 1.3L5.5 5.5L9.8 1.3" fill="none" stroke="#3c3c3c" stroke-width="1.1"/></svg>
<div style="left:380px;top:51px;width:136px;height:21px;background:#ffffff;border:1px solid #a8abab;box-sizing:border-box;"></div>
<div style="left:498px;top:52px;width:17px;height:19px;background:#e1e1e1;border:1px solid #a8abab;box-sizing:border-box;"></div>
<svg style="left:501px;top:58px" width="11" height="7" viewBox="0 0 11 7"><path d="M1.2 1.3L5.5 5.5L9.8 1.3" fill="none" stroke="#3c3c3c" stroke-width="1.1"/></svg>
<div style="left:282px;top:75px;width:138px;height:21px;background:#ffffff;border:1px solid #a8abab;box-sizing:border-box;"></div>
<div style="left:402px;top:76px;width:17px;height:19px;background:#e1e1e1;border:1px solid #a8abab;box-sizing:border-box;"></div>
<svg style="left:405px;top:82px" width="11" height="7" viewBox="0 0 11 7"><path d="M1.2 1.3L5.5 5.5L9.8 1.3" fill="none" stroke="#3c3c3c" stroke-width="1.1"/></svg>
<div style="left:605px;top:51px;width:145px;height:21px;background:#ffffff;border:1px solid #a8abab;box-sizing:border-box;"></div>
<div style="left:732px;top:52px;width:17px;height:19px;background:#e1e1e1;border:1px solid #a8abab;box-sizing:border-box;"></div>
<svg style="left:735px;top:58px" width="11" height="7" viewBox="0 0 11 7"><path d="M1.2 1.3L5.5 5.5L9.8 1.3" fill="none" stroke="#3c3c3c" stroke-width="1.1"/></svg>
<div style="left:484px;top:75px;width:244px;height:21px;background:#ffffff;border:1px solid #a8abab;box-sizing:border-box;"></div>
<div style="left:816px;top:75px;width:104px;height:21px;background:#ffffff;border:1px solid #a8abab;box-sizing:border-box;"></div>
<div style="left:902px;top:76px;width:17px;height:19px;background:#e1e1e1;border:1px solid #a8abab;box-sizing:border-box;"></div>
<svg style="left:905px;top:82px" width="11" height="7" viewBox="0 0 11 7"><path d="M1.2 1.3L5.5 5.5L9.8 1.3" fill="none" stroke="#3c3c3c" stroke-width="1.1"/></svg>
<div style="left:879px;top:51px;width:76px;height:21px;background:#ffffff;border:1px solid #a8abab;box-sizing:border-box;"></div>
<div style="left:995px;top:51px;width:73px;height:21px;background:#ffffff;border:1px solid #a8abab;box-sizing:border-box;"></div>
<span class="t" style="left:881.30px;top:53.00px;font-size:13.3px;letter-spacing:-0.095px;color:#000000;">01-Feb-19</span>
<div style="left:834px;top:2px;width:298px;height:29px;border:1px solid #a0a0a0;box-sizing:border-box;"></div>
<div style="left:835px;top:3px;width:298px;height:29px;border:1px solid #ffffff;box-sizing:border-box;border-right-color:#fff;border-bottom-color:#fff;border-top-color:transparent;border-left-color:#fff;"></div>
<div style="left:911px;top:7px;width:186px;height:21px;background:#ffffff;border:1px solid #a8abab;box-sizing:border-box;"></div>
<div style="left:1079px;top:8px;width:17px;height:19px;background:#e1e1e1;border:1px solid #a8abab;box-sizing:border-box;"></div>
<svg style="left:1082px;top:14px" width="11" height="7" viewBox="0 0 11 7"><path d="M1.2 1.3L5.5 5.5L9.8 1.3" fill="none" stroke="#3c3c3c" stroke-width="1.1"/></svg>
<svg style="left:5px;top:0px" width="26" height="23" viewBox="0 0 26 23"><g fill="#4a4a4a"><rect x="1" y="2.6" width="18.8" height="17.3"/><rect x="3.6" y="1" width="1.5" height="2.5"/><rect x="15.6" y="1" width="1.5" height="2.5"/></g><circle cx="16.8" cy="14.8" r="7.9" fill="#d6dce5"/><circle cx="16.8" cy="14.8" r="6.9" fill="#4a4a4a"/><g fill="#d3d8e1"><rect x="2.8" y="7" width="15.4" height="0.9"/><rect x="3.6" y="10.3" width="6.4" height="0.9"/><rect x="3.6" y="13.6" width="5.4" height="0.9"/><rect x="3.6" y="16.9" width="5.8" height="0.9"/><rect x="5.4" y="3.6" width="10" height="0.9" fill="#8a8d92"/></g><path d="M15.4 9.9h2.8v3.5h3.5v2.8h-3.5v3.5h-2.8v-3.5h-3.5v-2.8h3.5z" fill="#eceff3"/></svg>
<svg style="left:175px;top:1px" width="20" height="20" viewBox="0 0 20 20"><g stroke="#3a3a3a" stroke-width="2.5" stroke-linecap="butt" fill="none"><path d="M5.6 5.6L14.6 14.8"/><path d="M14.4 5.6L5.6 14.4"/></g><g fill="none" stroke="#3a3a3a" stroke-width="2"><path d="M4.44 1.51A2.7 2.7 0 1 1 1.51 4.44"/><path d="M18.49 4.44A2.7 2.7 0 1 1 15.56 1.51"/><path d="M1.51 15.56A2.7 2.7 0 1 1 4.44 18.49"/></g><circle cx="16" cy="16.4" r="2.3" fill="#eef0f4" stroke="#3a3a3a" stroke-width="1.3"/></svg>
<svg style="left:285px;top:1px" width="25" height="22" viewBox="0 0 25 22"><rect x="1.6" y="3" width="20.9" height="15.4" fill="#f7f8fa" stroke="#4d4d4d" stroke-width="1"/><rect x="1.1" y="2" width="21.9" height="3.8" fill="#2f2f2f"/><g fill="#3b3b3b"><rect x="4.6" y="0.6" width="1.3" height="2"/><rect x="8.8" y="0.6" width="1.3" height="2"/><rect x="13.4" y="0.6" width="1.3" height="2"/><rect x="17.6" y="0.6" width="1.3" height="2"/></g><g fill="#c9ccd1"><rect x="4.7" y="2.4" width="1.1" height="2.4"/><rect x="8.9" y="2.4" width="1.1" height="2.4"/><rect x="13.5" y="2.4" width="1.1" height="2.4"/><rect x="17.7" y="2.4" width="1.1" height="2.4"/></g><g stroke="#7d7d7d" stroke-width="0.8" fill="none"><path d="M2.4 8.9h11.5" stroke-width="1" stroke="#666"/><path d="M2.4 12.3h10M2.4 15.4h10M4.6 9v9M8.6 9v9M12.4 9v3"/></g><circle cx="17.7" cy="14.3" r="5.7" fill="#e6eef6" stroke="#45aad9" stroke-width="1"/><path d="M14.6 14.4h3.3L20.5 10.8" stroke="#2f9fd4" stroke-width="1.1" fill="none"/><g fill="#2f9fd4"><circle cx="17.7" cy="10.4" r="0.55"/><circle cx="17.7" cy="18.2" r="0.55"/><circle cx="21.6" cy="14.3" r="0.55"/><circle cx="13.8" cy="14.3" r="0.55"/></g></svg>
<svg style="left:439px;top:0px" width="20" height="22" viewBox="0 0 20 22"><rect x="5.5" y="1.2" width="1.5" height="2.2" fill="#8d949c"/><rect x="13.6" y="1.2" width="1.5" height="2.2" fill="#8d949c"/><rect x="0.9" y="3" width="18.1" height="17.9" rx="1.4" fill="#60c6a4"/><path d="M0.9 6.9V4.4a1.4 1.4 0 0 1 1.4-1.4h15.3a1.4 1.4 0 0 1 1.4 1.4v2.5z" fill="#72c4fa"/><path d="M6.2 14.2l3.3 3.2 5-5.3" fill="none" stroke="#fff" stroke-width="2.2"/></svg>
<svg style="left:1103px;top:7px" width="20" height="20" viewBox="0 0 20 20"><path d="M1.5 1.5h14.5l2.5 2.2v14.8h-17z" fill="#dfe3ea" stroke="#3c3c3c" stroke-width="1.4"/><rect x="5" y="1.5" width="8.5" height="5.8" fill="#e6e9ee" stroke="#3c3c3c" stroke-width="1.2"/><rect x="10" y="2.6" width="1.8" height="3" fill="#3c3c3c"/><path d="M4 18.5v-7.5h12v7.5" fill="#e6e9ee" stroke="#3c3c3c" stroke-width="1.2"/></svg>
<div style="left:1147px;top:3px;width:24px;height:24px;background:#ffffff;"></div>
<svg style="left:1147px;top:3px" width="24" height="24" viewBox="0 0 24 24"><path d="M7.3 3.4h-3.6a1.3 1.3 0 0 0-1.3 1.3v16.6a1.3 1.3 0 0 0 1.3 1.3h11.3a1.3 1.3 0 0 0 1.3-1.3" fill="#fff" stroke="#2b2b2b" stroke-width="1.3" stroke-linejoin="round"/><path d="M8.6 1.3h9.6l4.4 4.4v14.2a1.3 1.3 0 0 1-1.3 1.3h-12.7a1.3 1.3 0 0 1-1.3-1.3v-17.3a1.3 1.3 0 0 1 1.3-1.3z" fill="#fff" stroke="#2b2b2b" stroke-width="1.3" stroke-linejoin="round"/><path d="M18 1.6v4.2h4.3" fill="none" stroke="#2b2b2b" stroke-width="1.1"/><g stroke="#4a4a4a" stroke-width="1.5"><path d="M10 7.9h9.3M10 10.3h9.3M10 15.1h9.3"/><path d="M10 12.7h9.3" stroke="#111"/></g><g stroke="#333" stroke-width="1.1"><path d="M4.6 9.6h2.4M4.6 12.7h2.4M4.6 16.3h2.4"/></g></svg>
<svg style="left:1184px;top:3px" width="23" height="23" viewBox="0 0 23 23"><rect x="1" y="1" width="21" height="21" fill="#f9fafc"/><path d="M22 1v21h-21z" fill="#ffffff"/><path d="M1.5 1.5h18" stroke="#a9afb8" stroke-width="1" stroke-dasharray="0.8 1.3"/><path d="M1.5 1.5v19" stroke="#c3c8d0" stroke-width="1" stroke-dasharray="0.8 1.3"/><g stroke="#c4c8ce" stroke-width="1"><path d="M15 8h7M10.5 12.5h11.5M6 17h16M9.8 13v8.5M15.8 7.5v14"/></g><path d="M1 22L22 1" stroke="#858585" stroke-width="1.1"/><path d="M1.5 21.5h20.2v-15" fill="none" stroke="#b0b3b8" stroke-width="1"/><path d="M22 1.8v5.2h-5.4z" fill="#3b8bdb"/></svg>
<svg style="left:1095px;top:54px" width="29" height="30" viewBox="0 0 29 30"><path d="M3 2h11l6 6v18.5a1.5 1.5 0 0 1-1.5 1.5h-15.5a1.5 1.5 0 0 1-1.5-1.5v-23a1.5 1.5 0 0 1 1.5-1.5z" fill="#fff" stroke="#111" stroke-width="1.8" stroke-linejoin="round"/><path d="M14 2.5v5.5h5.5z" fill="#c9dcea" stroke="#111" stroke-width="1"/><g stroke="#111" stroke-width="1.5"><path d="M4.5 9h7M4.5 13h5.5M4.5 17h4.5M4.5 21h5M4.5 24.8h9"/></g><path d="M20 23l5 5" stroke="#111" stroke-width="4.6" stroke-linecap="round"/><path d="M20.3 23.3l4.5 4.5" stroke="#e8365d" stroke-width="2.8" stroke-linecap="round"/><circle cx="15.3" cy="18" r="6" fill="#fff" stroke="#111" stroke-width="3.6"/><circle cx="15.3" cy="18" r="6" fill="none" stroke="#3ea35a" stroke-width="2"/></svg>
<svg style="left:1139px;top:55px" width="29" height="28" viewBox="0 0 29 28"><path d="M6 9.5L2.6 5.8a1.6 1.6 0 0 1 1.2-2.8h20.8a1.6 1.6 0 0 1 1.2 2.8L17 15v9.3a1.2 1.2 0 0 1-1.2 1.2h-1.3a2.3 2.3 0 0 1-2.3-2.3v-1.4" fill="none" stroke="#111" stroke-width="1.7" stroke-linejoin="round" stroke-linecap="round"/><path d="M4.6 13l5.4 5.4M10 13l-5.4 5.4" stroke="#111" stroke-width="1.5" stroke-linecap="round"/></svg>
<div style="left:0px;top:821px;width:1214px;height:21px;background:#ffffff;"></div>
<div style="left:59px;top:820px;width:1074px;height:22px;background:#ffffff;border:1px solid #a6a6a6;box-sizing:border-box;"></div>
<div style="left:1132px;top:820px;width:83px;height:22px;background:#ffffff;border:1px solid #a6a6a6;box-sizing:border-box;"></div>
<span class="t" style="left:1.00px;top:822.00px;font-size:13.3px;letter-spacing:-0.292px;color:#3a3a3a;">Job Desc:</span>
<span class="t" style="left:1136.70px;top:822.00px;font-size:12.6px;letter-spacing:-0.004px;color:#3a3a3a;">$388,343.07</span>
</div></body></html>
